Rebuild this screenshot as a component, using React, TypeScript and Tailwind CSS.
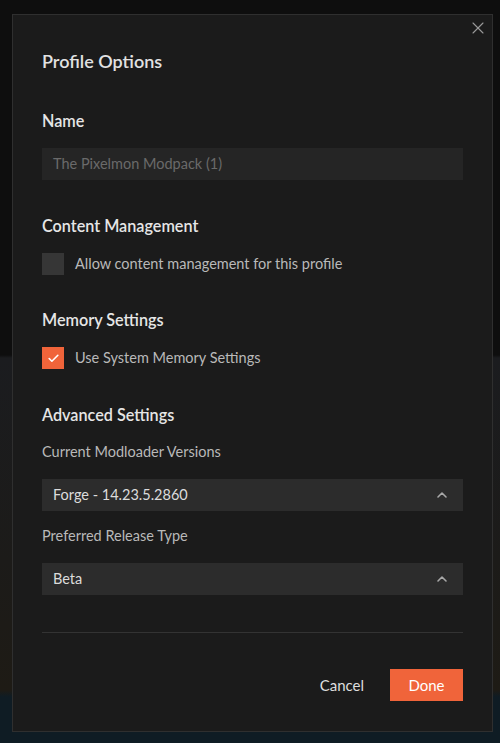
import { ChevronUp, Check, X } from 'lucide-react';

function SectionTitle({ children }: { children: string }) {
  return <h3 className="text-[16.2px] font-semibold leading-5 text-[#e6e6e6]">{children}</h3>;
}

function CheckRow({ checked, label }: { checked: boolean; label: string }) {
  return (
    <label className="flex items-center gap-[11px]">
      <span
        className={`flex h-[22px] w-[22px] items-center justify-center ${checked ? 'bg-[#f0643a]' : 'bg-[#363636]'}`}
      >
        {checked && <Check className="h-[13px] w-[13px] text-white" strokeWidth={3} />}
      </span>
      <span className="text-[14.5px] leading-5 text-[#b9b9b9]">{label}</span>
    </label>
  );
}

function Select({ value }: { value: string }) {
  return (
    <div className="flex h-8 items-center justify-between bg-[#2c2c2c] pl-[11px] pr-[13px] text-[14.5px] text-[#dcdcdc]">
      <span>{value}</span>
      <ChevronUp className="h-[16px] w-[16px] text-[#a8a8a8]" strokeWidth={2.4} />
    </div>
  );
}

export default function App() {
  return (
    <div
      className="min-h-[743px] w-[500px] bg-[linear-gradient(to_bottom,#0e0e0e_0px,#0e0e0e_355px,#1b1c1f_358px,#1c1b19_560px,#1e1b15_690px,#0f1c24_697px,#0f1c24_743px)] pl-[12px] pt-[14px] pb-[11px]"
      style={{ fontFamily: 'Lato, "Noto Sans", sans-serif' }}
    >
      <div className="relative flex h-[718px] w-[481px] flex-col border border-[#2f2f2f] bg-[#1b1b1b] px-[29px]">
        <button type="button" className="absolute right-[4px] top-[3px] text-[#9a9a9a]" aria-label="Close">
          <X className="h-[20px] w-[20px]" strokeWidth={1.3} />
        </button>

        <h2 className="mt-[34px] text-[18px] font-semibold leading-6 text-[#e2e2e2]">Profile Options</h2>

        <div className="mt-[38px]">
          <SectionTitle>Name</SectionTitle>
          <div className="mt-[17px] flex h-8 items-center bg-[#252525] px-[11px] text-[14.5px] text-[#6a6a6a]">
            The Pixelmon Modpack (1)
          </div>
        </div>

        <div className="mt-[36px]">
          <SectionTitle>Content Management</SectionTitle>
          <div className="mt-[17px]">
            <CheckRow checked={false} label="Allow content management for this profile" />
          </div>
        </div>

        <div className="mt-[35px]">
          <SectionTitle>Memory Settings</SectionTitle>
          <div className="mt-[17px]">
            <CheckRow checked label="Use System Memory Settings" />
          </div>
        </div>

        <div className="mt-[36px]">
          <SectionTitle>Advanced Settings</SectionTitle>
          <div className="mt-[17px] text-[14.5px] leading-5 text-[#b9b9b9]">Current Modloader Versions</div>
          <div className="mt-[17px]">
            <Select value="Forge - 14.23.5.2860" />
          </div>
          <div className="mt-[15px] text-[14.5px] leading-5 text-[#b9b9b9]">Preferred Release Type</div>
          <div className="mt-[17px]">
            <Select value="Beta" />
          </div>
        </div>

        <div className="mt-[37px] h-px bg-[#333333]" />

        <div className="mt-[36px] flex items-center justify-end gap-[26px]">
          <button type="button" className="text-[15px] text-[#dedede]">Cancel</button>
          <button type="button" className="h-8 w-[73px] bg-[#f0643a] text-[15px] text-white">Done</button>
        </div>
      </div>
    </div>
  );
}
